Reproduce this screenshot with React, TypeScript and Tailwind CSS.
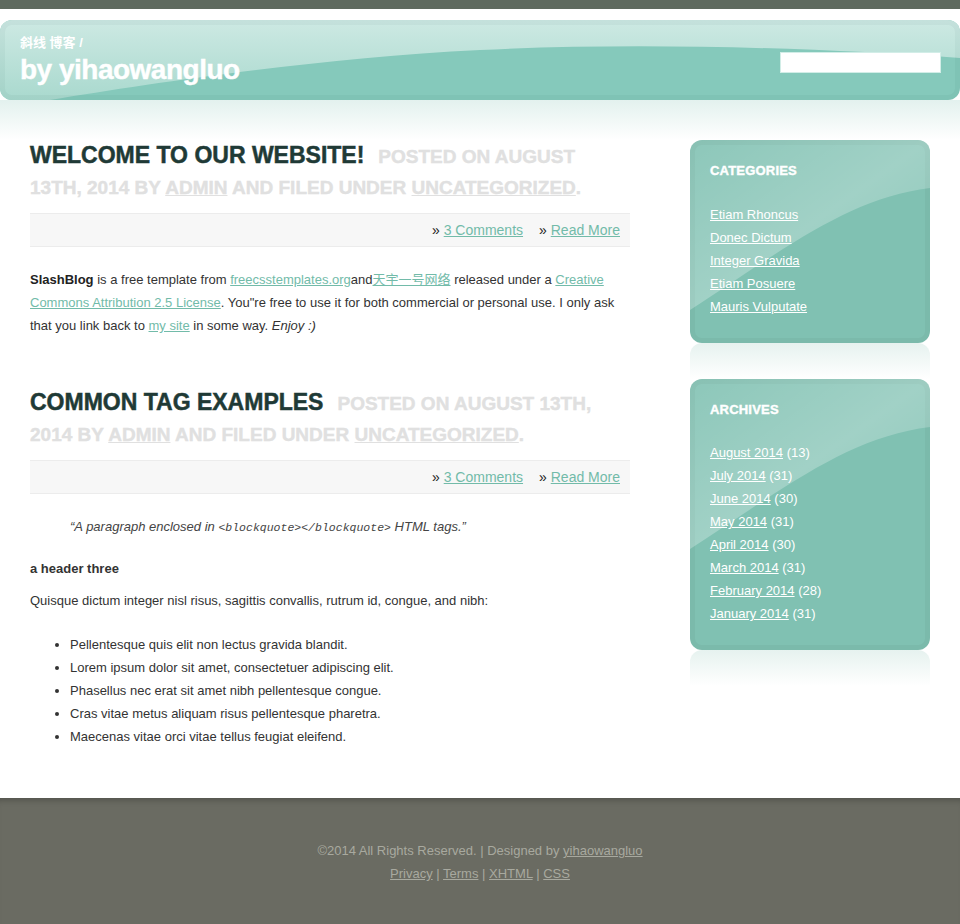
import React from "react";

const categories = ["Etiam Rhoncus", "Donec Dictum", "Integer Gravida", "Etiam Posuere", "Mauris Vulputate"];

const archives = [
  { month: "August 2014", count: 13 },
  { month: "July 2014", count: 31 },
  { month: "June 2014", count: 30 },
  { month: "May 2014", count: 31 },
  { month: "April 2014", count: 30 },
  { month: "March 2014", count: 31 },
  { month: "February 2014", count: 28 },
  { month: "January 2014", count: 31 },
];

const listItems = [
  "Pellentesque quis elit non lectus gravida blandit.",
  "Lorem ipsum dolor sit amet, consectetuer adipiscing elit.",
  "Phasellus nec erat sit amet nibh pellentesque congue.",
  "Cras vitae metus aliquam risus pellentesque pharetra.",
  "Maecenas vitae orci vitae tellus feugiat eleifend.",
];

function PostTitle({ title, meta }: { title: string; meta: React.ReactNode }) {
  return (
    <h2 className="text-[23px] font-bold uppercase leading-[31px]">
      <span className="text-[#1f3a36] [-webkit-text-stroke:0.5px_#1f3a36]">{title}</span>
      <span className="ml-[14px] text-[19px] leading-[24px] text-[#e0e0e0] [-webkit-text-stroke:0.4px_#e0e0e0]">
        {meta}
      </span>
    </h2>
  );
}

function PostMeta() {
  return (
    <div className="mt-[11px] flex h-[34px] items-center justify-end gap-[16px] border-y border-[#ececec] bg-[#f7f7f7] pr-[10px] text-[14px]">
      <span className="text-[#222]">
        » <a href="#" className="text-[#72bba9] underline">3 Comments</a>
      </span>
      <span className="text-[#222]">
        » <a href="#" className="text-[#72bba9] underline">Read More</a>
      </span>
    </div>
  );
}

function MetaText({ date }: { date: string }) {
  return (
    <>
      Posted on {date} by <a href="#" className="underline">admin</a> and filed under{" "}
      <a href="#" className="underline">Uncategorized</a>.
    </>
  );
}

function SideBox({ title, children }: { title: string; children: React.ReactNode }) {
  return (
    <div>
      <div className="relative overflow-hidden rounded-[12px] bg-[#80c1b2] px-[20px] pb-[25px] pt-[23px] shadow-[inset_0_0_0_5px_rgba(0,0,0,0.035)]">
        <svg className="absolute left-0 top-0 h-[200px] w-[240px]" viewBox="0 0 240 200">
          <defs>
            <linearGradient id={`g-${title}`} x1="0" y1="0" x2="1" y2="1">
              <stop offset="0" stopColor="#fff" stopOpacity="0.1" />
              <stop offset="0.5" stopColor="#fff" stopOpacity="0.26" />
              <stop offset="1" stopColor="#fff" stopOpacity="0.08" />
            </linearGradient>
          </defs>
          <path d="M0,0 H240 V48 C160,58 100,105 0,170 Z" fill={`url(#g-${title})`} />
        </svg>
        <div className="relative">
          <h3 className="text-[13px] font-bold uppercase leading-[16px] tracking-[0.2px] text-white [-webkit-text-stroke:0.4px_white]">
            {title}
          </h3>
          <ul className="mt-[23.5px] text-[13px] leading-[23px] text-white">{children}</ul>
        </div>
      </div>
      <div className="h-[36px] rounded-t-[12px] bg-gradient-to-b from-[#e6f2ef] to-white" />
    </div>
  );
}

export default function App() {
  return (
    <div className="min-h-screen bg-white font-['Liberation_Sans',Arial,'Noto_Sans_CJK_SC',sans-serif] text-[13px] text-[#333]">
      <div className="h-[9px] bg-[#5f6a5f]" />

      <div className="pt-[11px]">
        {/* header */}
        <header className="relative h-[80px] overflow-hidden rounded-[12px] bg-[#85c9bb]">
          <svg className="absolute inset-0 h-full w-full" viewBox="0 0 960 80" preserveAspectRatio="none">
            <defs>
              <linearGradient id="hg" x1="0" y1="0" x2="0" y2="1">
                <stop offset="0" stopColor="#cde9e3" />
                <stop offset="1" stopColor="#a9d9ce" />
              </linearGradient>
            </defs>
            <path d="M0,0 H960 V38 C820,28 640,22 480,30 C320,38 160,62 50,80 H0 Z" fill="url(#hg)" />
          </svg>
          <div className="absolute inset-0 rounded-[12px] shadow-[inset_0_0_0_5px_rgba(0,60,40,0.04)]" />
          <div className="relative flex items-start justify-between px-[20px]">
            <div className="pt-[15px] text-white">
              <div className="text-[13px] font-bold leading-[16px]">斜线 博客 /</div>
              <div className="mt-[3px] text-[28px] font-bold leading-[32px] tracking-[-0.5px] [-webkit-text-stroke:0.4px_white]">
                by yihaowangluo
              </div>
            </div>
            <input
              type="text"
              className="mr-[-1px] mt-[32px] h-[21px] w-[161px] border border-[#d2ede7] bg-white outline-none"
            />
          </div>
        </header>
        <div className="h-[40px] bg-gradient-to-b from-[#e3f1ee] to-white" />
      </div>

      <main className="flex gap-[60px] px-[30px] pb-[50px]">
        <div className="w-[600px]">
          {/* post 1 */}
          <PostTitle title="Welcome to Our Website!" meta={<MetaText date="August 13th, 2014" />} />
          <PostMeta />
          <p className="mt-[21px] leading-[23px]">
            <strong className="text-[#222]">SlashBlog</strong> is a free template from{" "}
            <a href="#" className="text-[#72bba9] underline">freecsstemplates.org</a>and
            <a href="#" className="text-[#72bba9] underline">天宇一号网络</a> released under a{" "}
            <a href="#" className="text-[#72bba9] underline">Creative Commons Attribution 2.5 License</a>. You"re
            free to use it for both commercial or personal use. I only ask that you link back to{" "}
            <a href="#" className="text-[#72bba9] underline">my site</a> in some way. <em>Enjoy :)</em>
          </p>

          {/* post 2 */}
          <div className="mt-[50px]">
            <PostTitle title="Common Tag Examples" meta={<MetaText date="August 13th, 2014" />} />
            <PostMeta />
            <blockquote className="mt-[21px] pl-[40px] italic leading-[23px] text-[#444]">
              “A paragraph enclosed in{" "}
              <code className="font-['Liberation_Mono',monospace] text-[11.5px]">&lt;blockquote&gt;&lt;/blockquote&gt;</code>{" "}
              HTML tags.”
            </blockquote>
            <h3 className="mt-[18px] font-bold leading-[23px] text-[#333]">a header three</h3>
            <p className="mt-[9px] leading-[23px]">
              Quisque dictum integer nisl risus, sagittis convallis, rutrum id, congue, and nibh:
            </p>
            <ul className="mt-[21px] list-disc pl-[40px] leading-[23px]">
              {listItems.map((item) => (
                <li key={item}>{item}</li>
              ))}
            </ul>
          </div>
        </div>

        {/* sidebar */}
        <aside className="w-[240px]">
          <SideBox title="Categories">
            {categories.map((c) => (
              <li key={c}>
                <a href="#" className="underline">{c}</a>
              </li>
            ))}
          </SideBox>
          <SideBox title="Archives">
            {archives.map((a) => (
              <li key={a.month}>
                <a href="#" className="underline">{a.month}</a> ({a.count})
              </li>
            ))}
          </SideBox>
        </aside>
      </main>

      <footer className="h-[126px] bg-[#6a6b62] pt-[41px] text-center text-[13px] leading-[23px] text-[#a8a99f] shadow-[inset_0_7px_6px_-5px_rgba(0,0,0,0.25)]">
        <p>
          ©2014 All Rights Reserved. | Designed by <a href="#" className="underline">yihaowangluo</a>
        </p>
        <p>
          <a href="#" className="underline">Privacy</a> | <a href="#" className="underline">Terms</a> |{" "}
          <a href="#" className="underline">XHTML</a> | <a href="#" className="underline">CSS</a>
        </p>
      </footer>
    </div>
  );
}
